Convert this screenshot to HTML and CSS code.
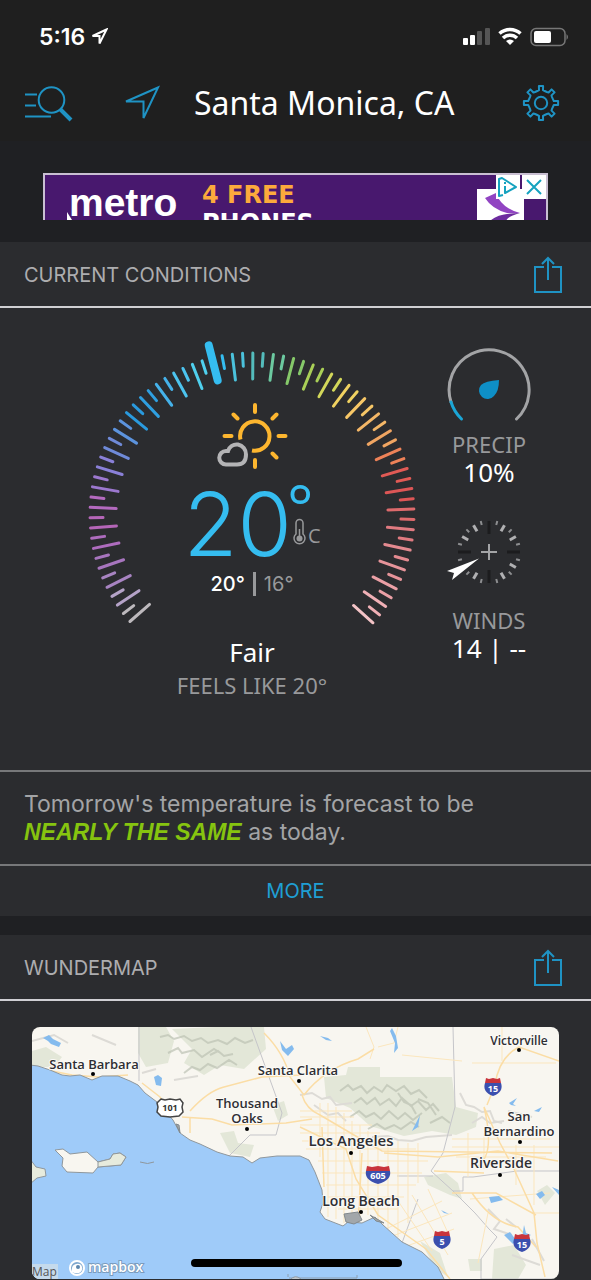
FILE: index.html
```
<!DOCTYPE html>
<html lang="en">
<head>
  <meta charset="UTF-8">
  <meta name="viewport" content="width=device-width, initial-scale=1.0">
  <title>Santa Monica, CA</title>
  <link rel="stylesheet" href="styles.css">
</head>
<body>
  <header class="top">
    <div class="status-bar">
      <span class="time">5:16</span>
      <svg width="17" height="17" viewBox="0 0 17 17" class="status-location"><path d="M15.5 1.5L1.5 8h7v7.500z"/></svg>
      <svg width="106" height="20" viewBox="0 0 106 20" class="status-icons">
        <g fill="#fff">
          <rect x="1" y="11" width="5" height="7" rx="1"/>
          <rect x="8" y="8" width="5" height="10" rx="1"/>
          <g fill="#555"><rect x="15" y="4" width="5" height="14" rx="1"/><rect x="23" y="1" width="5" height="17" rx="1"/></g>
          <path d="M48 18l-4-4a6 6 0 0 1 8 0z"/>
          <rect x="72" y="4" width="17" height="12" rx="2"/>
        </g>
        <g fill="none" stroke="#fff" stroke-width="3.500"><path d="M37.500 6.500a15.500 15.500 0 0 1 21 0"/><path d="M41 11a10 10 0 0 1 14 0"/></g>
        <rect x="69" y="1.500" width="34" height="17" rx="5" fill="none" stroke="#777" stroke-width="1.500"/>
        <path d="M104.500 7q3 3 0 6z" fill="#777"/>
      </svg>
    </div>
    <nav class="nav">
      <button type="button" class="icon-btn" aria-label="Search">
        <svg width="50" height="38" viewBox="0 0 50 38"><g class="line"><path d="M1 10.500h12M1 21.500h11M1 32.500h26"/><circle cx="27.500" cy="16" r="12.800"/><path d="M36.500 25.500L47 36" stroke-width="4"/></g></svg>
      </button>
      <button type="button" class="icon-btn" aria-label="My location">
        <svg width="38" height="38" viewBox="0 0 38 38"><path class="line" d="M34 3.500L2 17.500h17.500V34z"/></svg>
      </button>
      <h1>Santa Monica, CA</h1>
      <button type="button" class="icon-btn settings" aria-label="Settings">
        <svg width="38" height="38" viewBox="-19 -19 38 38"><g class="line" stroke-linejoin="round">
          <circle r="6.200"/>
          <path id="gear"/>
        </g></svg>
      </button>
    </nav>
  </header>

  <div class="ad-slot">
    <div class="ad">
      <div class="ad-brand">
        <svg class="ad-tail" width="5" height="8" viewBox="0 0 5 8"><path d="M0 0l5 8H0z" fill="#fff"/></svg>
        <span>metro</span>
      </div>
      <div class="ad-text"><span class="gold">4 FREE</span><span>PHONES</span></div>
      <svg class="ad-logo" width="47" height="32" viewBox="0 0 47 32"><rect width="47" height="32" fill="#fff"/><path d="M8 9l11-5q5 15 24 20H30Q15 20 8 9z" fill="#9144c2"/><path d="M13 32q8-8 30-8-12 3-14 8z" fill="#6d2c9f"/></svg>
      <div class="ad-controls">
        <a href="#" aria-label="Ad choices"><svg width="24" height="24" viewBox="0 0 24 24"><g fill="none" stroke="#15a2bf" stroke-width="2" stroke-linejoin="round"><path d="M7 20l-4 1V4l3-1 14 9-11 6V11"/><path d="M9 7v2"/></g></svg></a>
        <a href="#" aria-label="Close ad"><svg width="24" height="24" viewBox="0 0 24 24"><path d="M5 5l14 14M19 5L5 19" stroke="#15a2bf" stroke-width="2"/></svg></a>
      </div>
    </div>
  </div>

  <main>
    <section class="card">
      <div class="card-head">
        <h2>CURRENT CONDITIONS</h2>
        <button type="button" class="icon-btn" aria-label="Share current conditions">
          <svg width="30" height="38" viewBox="0 0 30 38"><path class="line" d="M11 11H2v25h26V11h-9M15 24V2M9 8l6-6 6 6"/></svg>
        </button>
      </div>

      <div class="conditions">
        <div class="now">
          <div class="gauge">
            <svg class="dial" viewBox="-172 -181 344 300">
              <g id="ticks" stroke-width="3" stroke-linecap="round"></g>
            </svg>
            <div class="readings">
              <svg width="72" height="66" viewBox="0 0 72 66" class="sky">
                <g fill="none" stroke="#fdb62f" stroke-width="4" stroke-linecap="round">
                  <path d="M24.500 36.500A14.700 14.700 0 1 1 36 47.500" stroke-linecap="butt"/>
                  <path d="M39 2v7M39 57v7M8.500 33h7M62.500 33h7M17.500 11.500l4 4M60.500 11.500l-4 4M60.500 54.500l-4-4"/>
                </g>
                <path d="M10 61.500a6.500 6.500 0 0 1 0-13.500h2a9 9 0 0 1 10-6.500 10 10 0 0 1 8 10q0 10-9 10z" fill="none" stroke="#b4b4b6" stroke-width="4"/>
              </svg>
              <div class="temp">
                <span class="value">20</span>
                <span class="unit">
                  <span class="degree">°</span>
                  <span class="scale">
                    <svg width="13" height="28" viewBox="0 0 13 28"><path d="M3 16V5a3.500 3.500 0 0 1 7 0v11a5.500 5.500 0 1 1-7 0z" fill="none" stroke="#98999b" stroke-width="1.500"/><circle cx="6.500" cy="20.500" r="3" fill="#98999b"/><path d="M6.500 11v9" stroke="#98999b" stroke-width="1.500"/></svg>
                    <span>C</span>
                  </span>
                </span>
              </div>
              <div class="range"><strong>20°</strong><i></i><span>16°</span></div>
            </div>
          </div>
          <p class="summary">Fair</p>
          <p class="feels">FEELS LIKE 20°</p>
        </div>

        <div class="side">
          <div class="metric">
            <svg width="84" height="84" viewBox="-42 -42 84 84">
              <g fill="none" stroke-width="3" stroke-linecap="round">
                <path d="M-38 12A40 40 0 1 1 27.500 29" stroke="#a3a4a6"/>
                <path d="M-27.500 29A40 40 0 0 1-38 12" stroke="#1ba6d6"/>
              </g>
              <path d="M10-10q0 11-5 16a8.500 8.500 0 0 1-13-11Q-4-9 10-10z" fill="#0e8fc6"/>
            </svg>
            <h3>PRECIP</h3>
            <p>10%</p>
          </div>
          <div class="metric wind">
            <svg width="84" height="84" viewBox="-42 -42 84 84">
              <g id="compass" stroke-width="2"></g>
              <path d="M-8 0H8M0-8V8" stroke="#a3a4a6" stroke-width="2"/>
              <path d="M-10 6.500l-32 12.500 7 2-2 7z" fill="#fff"/>
            </svg>
            <h3>WINDS</h3>
            <p>14 | --</p>
          </div>
        </div>
      </div>

      <p class="forecast">Tomorrow's temperature is forecast to be<br><em>NEARLY THE SAME</em> as today.</p>
      <a href="#" class="more">MORE</a>
    </section>

    <section class="card">
      <div class="card-head">
        <h2>WUNDERMAP</h2>
        <button type="button" class="icon-btn" aria-label="Share map">
          <svg width="30" height="38" viewBox="0 0 30 38"><path class="line" d="M11 11H2v25h26V11h-9M15 24V2M9 8l6-6 6 6"/></svg>
        </button>
      </div>
      <div class="map-wrap">
        <svg class="map" viewBox="0 0 527 252" preserveAspectRatio="xMidYMid slice">
          <rect width="527" height="252" fill="#f8f6f0"/>
          <!-- forests -->
          <g fill="#e3e7d8">
            <path d="M106 0h28l8 14-6 22-22 4-8-14zM140 2l44-2h48l2 22-22 20-24-4-16 10-20-12 8-14zM0 24l14-4 16 10-8 10H0z"/>
            <path d="M292 50l22-2 2-8h32v10h72l4 30 22 6-2 14-20 8-24-4-28 5-34-10-20-18-24-10z"/>
            <path d="M188 106l14-2 4 12 16 2-4 12-20-4zM240 78l12-4 4 14-10 6zM392 150l22-4 12 10 4 16-12-4-22-10z"/>
            <path d="M462 222l20-4 12 20-8 14h-26zM436 232h14v12h-12zM388 214l20 12 8 24-12-8zM505 164l10-6 8 8-10 12z"/>
          </g>
          <!-- relief -->
          <g fill="none" stroke="#bcc2b3" stroke-width="2" opacity=".7">
            <path d="M128 10l8-2 6 4 10-3 8 5 9-3 7 5 10-3 9 4 8-6 10 5 8-3M136 26l10-5 4 5 12-3 8 7 12-8 8 5M152 46l8-6 8 3 8-6 9 4 12-8 8 5M178 28l8-4 6 5 9-2"/>
            <path d="M308 64l8-6 5 5 8-4 6 7 7-6 8 5 5-7 9 6 8-5 7 8 8-4 8 8M322 76l7-5 6 6 8-6 5 7 9-6 7 7 6-8 9 8 7-5 8 9 7-6 6 7M318 90l9-6 7 6 8-4 7 6 8-8 9 8 7-6 8 7 9-7M336 102l9-5 8 5 9-4 7 4 10-7 8 5M366 66l6 9 7 3 5 9M386 72l10 4 8 12M398 96l12-6 8 6"/>
          </g>
          <g fill="none" stroke="#dddbd6" stroke-width="2">
            <path d="M0 14l22-6 14 8M60 8l24 10M110 46l14-4M268 68l12-2 10 6 8-2 6 8 16-2M282 78l14 10 10-2 8 8M340 110l16-1 10 4 14 1 14-4 26-2M428 66l6 12 8 2 8 5 8-1 4 10 8 2M440 96l10-6 8 6 14-2M456 182l12 12-6 8 18 6M474 192l10 8M500 90l-24-6M480 228l28 10M500 212l12 22M142 53l24-4"/>
          </g>
          <!-- county lines -->
          <g fill="none" stroke="#c5c5c9" stroke-width="1">
            <path d="M107 0v54M219 0l31 86-6 22h-26l-22 22M421 0l2 80-12 46-12 18 22 20h10v-14h10l44-6h48M365 149h36M421 164l22 22 14 16 8 8-16 22v20h78M386 172l-16 44"/>
          </g>
          <!-- roads -->
          <g fill="none" stroke="#fbe6bd" stroke-width="1">
            <path d="M268 84h52M268 90h54M268 98h72M268 106h80M270 114h90M274 122h110M286 134h110M290 146h100M294 158h90M296 170h76M306 182h60M288 76v54M296 76v114M304 80v112M312 86v110M320 94v98M328 98v92M336 104v84M346 110v86M356 112v90M366 114v96M376 116v80M386 116v40"/>
            <path d="M350 204l60-30M358 210l62-24M372 220l50-18M366 174l34 50M380 168l36 60M396 162l20 44M420 112h98M420 120h107M424 130h90M436 106v44M452 106v36M484 118v40M502 118v60M438 172l80-6M446 236l10-50M500 186h27"/>
            <path d="M440 36h84M470 0v34M334 0l8 20-4 12M346 20l16-4 4-16M370 28l60 6"/>
          </g>
          <g fill="none" stroke="#fbdda5" stroke-width="1.500">
            <path d="M232 6q20 20 26 44l14 18M270 68q4 14 18 20l34 20 28 16 170 2M272 68q20-26 54-36l16-10M0 40l40 8 26 2 30-2M110 56l18 14 12 18M158 84q18-20 34-24l38-10 40-2M150 90l30 2 20 6 54-2 26-4M268 100l46 22 10 30 22 36 48 34 24 30M290 100l2 60M330 126l-4 70M452 80q12 50-8 60M455 78l8-20q4-28 24-38l40 14M452 80l16 36 14 26 20 44 3 30 8 34M402 144l50 2M420 166l44 0 40 22M352 126l54 4 60-6 60 10M158 90v16M440 166q20 30 46 34l18 20"/>
          </g>
          <!-- lakes -->
          <g fill="#84bbee">
            <path d="M11 11l6-3 4 4 8 4-2 4-8-3-3-3zM122 50l4-2 4 3-1 8-5-1zM248 14l6 8 6-4 2 4-6 7-6-6zM360 1l4 8 2 12-4 5 1-10-5-12zM382 100l6-12-2 12-6 4zM288 9l8 2 4 3-6-1zM477 76l8-5-4 6 3 2-5-1zM502 84l8-4-3 5zM457 170l10-1 4 4-12 3zM504 167l6-3 3 4-5 4zM520 160l7 3v5zM472 208l6-3 6 8-3 4zM490 212l2-14 2 8 5 2zM409 183l8 4-5-1z"/>
          </g>
          <!-- ocean and coast -->
          <g stroke="#8f979c" stroke-width="1">
            <path fill="#9fcbf9" d="M-2 38L6 39 18 43 30 48 38 49 48 48 60 53 70 49 86 49 98 54 106 58 113 66 125 75 141 93 148 106 158 113 168 117 185 125 198 129 211 130 220 136 228 131 245 129 268 129 277 133 283 145 290 163 291 176 288 185 293 192 311 199 316 195 330 196 343 190 351 198 370 215 390 225 406 240 414 256H-2z"/>
            <path fill="#f8f6f0" d="M23 123l8-1 7 5 17-2 11 10 12-3 3-5 7-1 6 4-5 8-23 2-5 6-26-1-5-6 1-8z"/>
            <path fill="#e7ebdd" d="M66 135l12-3 3-5 7-1 6 4-5 8-23 2z"/>
            <path fill="#e7ebdd" d="M-2 132l6 8 9 2 1 7-9 2-7 6z"/>
            <path fill="none" d="M108 135q8 3 14 0"/>
            <path fill="#f8f6f0" d="M258 253q5-6 11-1"/>
          </g>
          <path d="M312 187l14-2 4 8-8 4-8-2zM338 188l14 8-8-2zM144 97l3 1 1 8z" fill="#a2a7aa" stroke="#82898d"/>
          <!-- city labels -->
          <g class="cities">
            <text x="62" y="42">Santa Barbara</text><circle cx="61" cy="47" r="2"/>
            <text x="266" y="48">Santa Clarita</text><circle cx="267" cy="54" r="2"/>
            <text x="215" y="81">Thousand</text><text x="215" y="96">Oaks</text><circle cx="215" cy="102" r="2"/>
            <text x="319" y="119" class="big">Los Angeles</text><circle cx="319" cy="126" r="2"/>
            <text x="329" y="179" class="mid">Long Beach</text><circle cx="329" cy="185" r="2"/>
            <text x="487" y="18" class="small">Victorville</text><circle cx="487" cy="23" r="2"/>
            <text x="487" y="94">San</text><text x="487" y="109">Bernardino</text><circle cx="488" cy="115" r="2"/>
            <text x="469" y="141" class="mid">Riverside</text><circle cx="468" cy="148" r="2"/>
          </g>
          <!-- highway shields -->
          <path d="M129 72l4 1 5-1 6 1 4-1 3 4-1 4 1 5-4 4-9 1-9-1-4-4 1-5-1-4z" fill="#fff" stroke="#444" stroke-width="1.500"/>
          <text x="138" y="84" class="shield us">101</text>
          <g transform="translate(461 60)"><path d="M-8-4H8q3 9-8 13-11-4-8-13z" fill="#3b4fae"/><path d="M-8-4l1-5 3 1 4-1 4 1 3-1 1 5z" fill="#c8343c"/><text y="5" class="shield">15</text></g>
          <g transform="translate(346 148)"><path d="M-12-4h24q2 9-12 13-14-4-12-13z" fill="#3b4fae"/><path d="M-12-4l1-5 5 1 6-1 6 1 5-1 1 5z" fill="#c8343c"/><text y="4" class="shield">605</text></g>
          <g transform="translate(410 213)"><path d="M-8-4H8q3 9-8 13-11-4-8-13z" fill="#3b4fae"/><path d="M-8-4l1-5 3 1 4-1 4 1 3-1 1 5z" fill="#c8343c"/><text y="5" class="shield">5</text></g>
          <g transform="translate(490 216)"><path d="M-8-4H8q3 9-8 13-11-4-8-13z" fill="#3b4fae"/><path d="M-8-4l1-5 3 1 4-1 4 1 3-1 1 5z" fill="#c8343c"/><text y="5" class="shield">15</text></g>
          <!-- attribution -->
          <rect y="237" width="26" height="15" fill="#c5daec"/>
          <text x="0" y="249" class="map-label">Map</text>
          <circle cx="45" cy="241" r="7" fill="#7fa8cf" stroke="#fff" stroke-width="2"/>
          <path d="M40 245q-1-7 4-8t6 3-3 6q-3 1-7-1z" fill="#fff"/><circle cx="46" cy="240" r="2" fill="#5d86ad"/>
          <text x="56" y="245" class="mapbox">mapbox</text>
          <path d="M256 250v-3M257 251h68v-3" fill="none" stroke="#8d9fb0"/>
        </svg>
      </div>
    </section>
  </main>
  <div class="home-indicator"></div>

  <script>
    const NS = 'http://www.w3.org/2000/svg';

    function addTick(parent, angle, inner, outer, color, width) {
      const line = document.createElementNS(NS, 'line');
      const a = angle * Math.PI / 180;
      line.setAttribute('x1', Math.sin(a) * inner);
      line.setAttribute('y1', -Math.cos(a) * inner);
      line.setAttribute('x2', Math.sin(a) * outer);
      line.setAttribute('y2', -Math.cos(a) * outer);
      line.setAttribute('stroke', color);
      if (width) line.setAttribute('stroke-width', width);
      parent.appendChild(line);
    }

    // one color for every long tick of the dial, cold to hot
    const colors = ['#bdb9bd', '#b5a3c8', '#a884c2', '#a775be', '#ae6cbe', '#b566b8', '#b46abf',
      '#9c78cf', '#8a80d8', '#6f8ad8', '#5c93dd', '#2a9ade', '#2f9fe0', '#45b2ea', '#4cc4ef',
      '#4fd0ee', '#35bdf0', '#4bc2dc', '#54bcbc', '#6cc9a0', '#86c96a', '#a9cf57', '#d2d75a',
      '#f0d261', '#f7c767', '#f4b767', '#f0a562', '#ee8258', '#e15a55', '#dd5656', '#dd6a6c',
      '#df7a80', '#e38a90', '#e6949a', '#eba0a6', '#f0b0b6', '#f3c3c6'];
    const ticks = document.getElementById('ticks');
    for (let i = 0; i < 73; i++) {
      const angle = (i - 36) * 3.65 + 0.3;
      if (i === 32) {
        addTick(ticks, angle, 139, 175, '#35bdf0', 8);
      } else {
        addTick(ticks, angle, i % 2 ? 149 : 136, 162, colors[Math.floor(i / 2)]);
      }
    }

    // compass, the four main points are dark
    const compass = document.getElementById('compass');
    for (let d = 0; d < 360; d += 15) {
      if (d === 240) continue;
      if (d % 90 === 0) addTick(compass, d, 18, 31, '#1c1c1e', 3);
      else if (d % 30 === 0) addTick(compass, d, 24, 31, '#b0b0b2', 3);
      else addTick(compass, d, 28, 32, '#8d8e90');
    }

    // settings gear, 8 teeth
    let gear = '';
    for (let i = 0; i < 8; i++) {
      [[-17, 12.500], [-9, 13], [-7, 17.200], [7, 17.200], [9, 13], [17, 12.500]].forEach(([off, r]) => {
        const a = (i * 45 + off) * Math.PI / 180;
        gear += (gear ? 'L' : 'M') + (Math.sin(a) * r).toFixed(1) + ' ' + (-Math.cos(a) * r).toFixed(1);
      });
    }
    document.getElementById('gear').setAttribute('d', gear + 'z');
  </script>
</body>
</html>
```
FILE: styles.css
```
* {
  box-sizing: border-box;
}
body {
  margin: 0;
  background-color: #1f2023;
  color: #fff;
  font-family: Inter, "Liberation Sans", sans-serif;
}
h1, h2, h3, p {
  margin: 0;
  font-weight: 400;
}
svg {
  display: block;
  flex-shrink: 0;
}
.line {
  fill: none;
  stroke: #1f93c4;
  stroke-width: 2;
}
.icon-btn {
  padding: 0;
  border: none;
  background: none;
  cursor: pointer;
}

/* header */
.top {
  background-color: #1f1f1f;
  padding-bottom: 8px;
}
.status-bar {
  display: flex;
  align-items: center;
  height: 73px;
  padding: 0 23px 0 39px;
}
.time {
  font-size: 23px;
  font-weight: 600;
}
.status-location {
  margin-left: 6px;
  fill: none;
  stroke: #fff;
  stroke-width: 2;
}
.status-icons {
  margin-left: auto;
}
.nav {
  display: flex;
  align-items: center;
  height: 60px;
  padding: 0 31px 0 24px;
}
.nav h1 {
  margin-left: 32px;
  font-family: "Noto Sans", "Open Sans", sans-serif;
  font-size: 32px;
  line-height: 40px;
}
.nav .icon-btn + .icon-btn {
  margin-left: 50px;
}
.nav .settings {
  margin-left: auto;
}

/* banner */
.ad-slot {
  padding: 32px 43px 22px;
}
.ad {
  position: relative;
  display: flex;
  height: 47px;
  padding-left: 22px;
  overflow: hidden;
  background-color: #48186e;
  border: 2px solid #c9bfd2;
  border-bottom: none;
}
.ad-brand {
  display: flex;
  align-items: flex-end;
  width: 135px;
  font-family: "Liberation Sans", Arial, sans-serif;
  font-size: 39px;
  font-weight: 700;
  line-height: 34px;
}
.ad-tail {
  margin-right: -3px;
}
.ad-text {
  display: flex;
  flex-direction: column;
  padding-top: 6px;
  font-family: "DejaVu Sans", sans-serif;
  font-size: 24px;
  font-weight: 700;
  line-height: 28px;
}
.gold {
  color: #fcaa3c;
}
.ad-logo {
  margin: 14px 22px 0 auto;
}
.ad-controls {
  position: absolute;
  top: 0;
  right: 0;
  display: flex;
  gap: 2px;
}
.ad-controls a {
  background-color: #fff;
}

/* cards */
.card {
  margin-bottom: 19px;
  background-color: #2b2c2f;
}
.card:last-child {
  margin-bottom: 0;
}
.card-head {
  display: flex;
  align-items: center;
  justify-content: space-between;
  height: 66px;
  padding: 2px 28px 0 24px;
  border-bottom: 2px solid #cfcfd3;
}
.card-head h2 {
  font-size: 20px;
  color: #adadaf;
}

.conditions {
  display: flex;
  justify-content: space-between;
  padding: 26px 60px 70px 80px;
}
.now {
  width: 344px;
  text-align: center;
  font-family: "Noto Sans", "Open Sans", sans-serif;
}
.gauge {
  display: grid;
}
.dial, .readings {
  grid-area: 1 / 1;
}
.readings {
  display: flex;
  flex-direction: column;
  align-items: center;
  padding-top: 69px;
}
.temp {
  display: flex;
  height: 101px;
  color: #35bdf0;
  font-family: "Open Sans", sans-serif;
}
.value {
  font-family: Inter, sans-serif;
  font-size: 88px;
  font-weight: 300;
  line-height: 110px;
}
.unit {
  display: flex;
  flex-direction: column;
  margin-left: -5px;
}
.degree {
  height: 49px;
  font-size: 62px;
  line-height: 74px;
  text-align: left;
}
.scale {
  display: flex;
  align-items: flex-end;
  gap: 2px;
  margin-left: 6px;
  color: #98999b;
  font-size: 20px;
  line-height: 20px;
}
.range {
  display: flex;
  align-items: center;
  gap: 8px;
  color: #98999b;
  font-family: Inter, sans-serif;
  font-size: 20px;
  line-height: 28px;
}
.range strong {
  color: #fff;
  font-weight: 500;
}
.range i {
  width: 3px;
  height: 24px;
  background-color: #98999b;
}
.summary {
  font-size: 26px;
  line-height: 36px;
}
.feels {
  color: #98999b;
  font-size: 22px;
  line-height: 30px;
}
.side {
  display: flex;
  flex-direction: column;
  align-items: center;
  width: 84px;
  padding-top: 14px;
  font-family: "Noto Sans", "Open Sans", sans-serif;
}
.metric {
  display: flex;
  flex-direction: column;
  align-items: center;
  text-align: center;
}
.metric h3 {
  color: #98999b;
  font-size: 22px;
  line-height: 24px;
}
.metric p {
  font-size: 26px;
  line-height: 32px;
  white-space: nowrap;
}
.wind {
  margin-top: 22px;
}
.wind h3 {
  margin-top: 14px;
}

.forecast {
  padding: 18px 24px;
  border-top: 2px solid #77787a;
  border-bottom: 2px solid #77787a;
  color: #a3a4a6;
  font-size: 23px;
  line-height: 28px;
}
.forecast em {
  color: #86c40f;
  font-family: "Liberation Sans", Arial, sans-serif;
  font-weight: 700;
}
.more {
  display: block;
  color: #1f9fd4;
  font-size: 20px;
  line-height: 50px;
  text-align: center;
  text-decoration: none;
}

/* map */
.map-wrap {
  padding: 26px 32px 1px;
}
.map {
  width: 100%;
  border-radius: 8px;
}
.map text {
  font-family: "Open Sans", sans-serif;
}
.cities text {
  fill: #2e2e33;
  font-size: 13px;
  font-weight: 600;
  text-anchor: middle;
  stroke: #fbfaf6;
  stroke-width: 2px;
  paint-order: stroke;
}
.cities .big {
  font-size: 15px;
}
.cities .mid {
  font-size: 14px;
}
.cities .small {
  font-size: 12px;
}
.map .shield {
  fill: #fff;
  font-size: 9px;
  font-weight: 700;
  text-anchor: middle;
}
.map .us {
  fill: #333;
}
.map .map-label {
  fill: #555;
  font-size: 12px;
}
.map .mapbox {
  fill: #fff;
  font-size: 14px;
  font-weight: 600;
  stroke: #7b9cbd;
  stroke-width: 2px;
  paint-order: stroke;
}
.home-indicator {
  position: fixed;
  bottom: 13px;
  left: 50%;
  width: 211px;
  height: 8px;
  margin-left: -105px;
  border-radius: 4px;
  background-color: #000;
}
```
